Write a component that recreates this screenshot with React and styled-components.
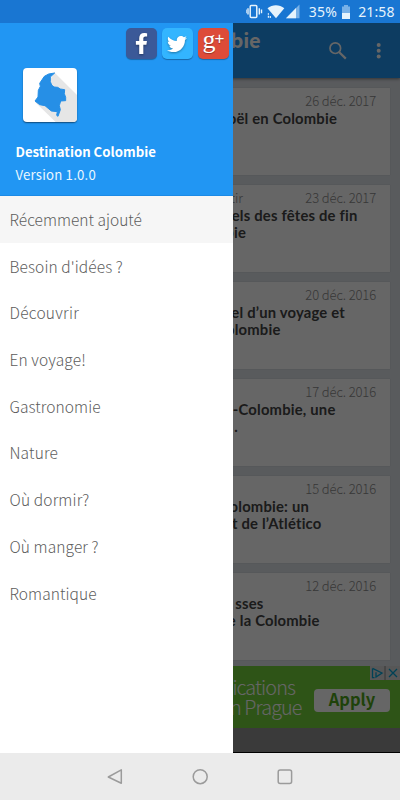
import React from 'react';
import styled, { createGlobalStyle } from 'styled-components';
import { FaFacebookF, FaTwitter } from 'react-icons/fa';

const GlobalStyle = createGlobalStyle`
  * { box-sizing: border-box; }
  body { margin: 0; }
`;

const sans = '"Noto Sans CJK SC", "Noto Sans", sans-serif';

const Screen = styled.div`
  width: 400px;
  height: 800px;
  display: grid;
  grid-template-rows: 23px 730px 47px;
  overflow: hidden;
  font-family: ${sans};
`;

const StatusBar = styled.header`
  background: #1976d2;
  display: flex;
  align-items: center;
  justify-content: flex-end;
  padding-right: 5.5px;
  color: #e6f3fc;
`;

const StatusIcons = styled.svg`
  width: 56px;
  height: 23px;
  margin-right: 7px;
`;

const StatusText = styled.span`
  font: 400 14px/23px "Noto Sans", sans-serif;
  letter-spacing: ${(p) => p.$spacing || 0}px;
  white-space: nowrap;
`;

const Battery = styled.svg`
  width: 10px;
  height: 16px;
  margin: 1px 7px 0 4px;
`;

const Stage = styled.main`
  position: relative;
  overflow: hidden;
`;

const Page = styled.div`
  height: 730px;
  display: flex;
  flex-direction: column;
  background: #dfe3e9;
`;

const AppBar = styled.div`
  height: 55px;
  flex: none;
  background: #2196f3;
  display: flex;
  align-items: flex-start;
  justify-content: space-between;
  box-shadow: 0 1px 3px rgba(0, 0, 0, 0.45);
  color: #fff;
`;

const AppTitle = styled.h1`
  margin: 3px 0 0;
  width: 260.5px;
  text-align: right;
  font: 700 20px/28px ${sans};
  letter-spacing: -0.2px;
  white-space: nowrap;
`;

const BarActions = styled.svg`
  width: 80px;
  height: 55px;
`;

const CardList = styled.div`
  height: 588px;
  flex: none;
  display: flex;
  flex-direction: column;
  gap: 9.4px;
  padding: 9.5px 10px 0;
`;

const Card = styled.article`
  height: 87.65px;
  flex: none;
  background: #fff;
  box-shadow: 0 0 1px rgba(0, 0, 0, 0.2);
  padding: 4.5px 14px 0 0;
`;

const CardMeta = styled.div`
  display: flex;
  justify-content: space-between;
  height: 18px;
  color: #8b8b8b;
`;

const Category = styled.span`
  width: 233px;
  text-align: right;
  font: 300 13px/17px ${sans};
`;

const DateLabel = styled.time`
  font: 300 13px/18px ${sans};
  letter-spacing: -0.12px;
`;

const TitleLine = styled.div`
  width: ${(p) => p.$end - 10}px;
  text-align: right;
  font: 700 14.8px/17px Lato, sans-serif;
  letter-spacing: 0.2px;
  color: #444;
  white-space: nowrap;
`;

const AdBanner = styled.aside`
  height: 62px;
  flex: none;
  background: #74d13b;
  display: grid;
  grid-template-columns: 296px 1fr;
`;

const AdCopy = styled.div`
  padding-top: 11px;
  text-align: right;
  color: #fff;
`;

const AdLine = styled.div`
  font: 300 19.8px/20px ${sans};
  letter-spacing: -0.9px;
  margin-right: ${(p) => p.$inset}px;
  white-space: nowrap;
`;

const AdSide = styled.div`
  display: flex;
  flex-direction: column;
  align-items: flex-end;
`;

const AdChoices = styled.svg`
  width: 30px;
  height: 14px;
`;

const ApplyButton = styled.div`
  width: 76px;
  height: 23px;
  margin: 9px 10px 0 0;
  border-radius: 4px;
  background: #fff;
  color: #4fa51b;
  text-align: center;
  font: 700 16.5px/21px ${sans};
`;

const PageFooter = styled.div`
  flex: 1;
  background: #929292;
  border-bottom: 1px solid #000;
`;

const Scrim = styled.div`
  position: absolute;
  inset: 0;
  background: rgba(0, 0, 0, 0.6);
`;

const Drawer = styled.nav`
  position: absolute;
  inset: 0 auto 0 0;
  width: 233.4px;
  background: #fff;
`;

const DrawerHeader = styled.div`
  height: 173px;
  background: #2196f3;
  border-bottom: 1px solid #1b8ae6;
  display: flex;
  flex-direction: column;
`;

const SocialRow = styled.div`
  height: 45px;
  display: flex;
  justify-content: flex-end;
  gap: 5px;
  padding: 5px 4.5px 0 0;
`;

const SocialButton = styled.span`
  width: 31px;
  height: 31px;
  border-radius: 5px;
  display: flex;
  align-items: ${(p) => p.$align || 'center'};
  justify-content: center;
  background: ${(p) => p.$color};
  color: #fff;
  box-shadow: 0 1px 1px rgba(0, 0, 0, 0.3);
  svg { filter: drop-shadow(0 1px 1px rgba(0, 0, 0, 0.35)); }
`;

const PlusG = styled.span`
  font: 400 26px/24px "Liberation Serif", serif;
  text-shadow: 0 1px 1px rgba(0, 0, 0, 0.35);
`;

const PlusSign = styled.span`
  font: 400 17px/22px "Liberation Sans", sans-serif;
  margin-left: -1px;
  text-shadow: 0 1px 1px rgba(0, 0, 0, 0.35);
`;

const AppLogo = styled.svg`
  width: 54px;
  height: 54px;
  margin-left: 22.6px;
  border-radius: 4px;
  background: #fff;
  box-shadow: 0 1px 1.5px rgba(0, 0, 0, 0.5);
`;

const AppName = styled.div`
  margin: 19px 0 0 15.5px;
  font: 700 13.2px/22px ${sans};
  color: #fff;
`;

const Version = styled.div`
  margin: 1px 0 0 15.5px;
  font: 400 13.2px/22px ${sans};
  letter-spacing: 0.2px;
  color: #e9f7ff;
`;

const Menu = styled.ul`
  list-style: none;
  margin: 0;
  padding: 0;
`;

const MenuItem = styled.li`
  height: 46.7px;
  padding: 0 0 0 9.5px;
  font: 300 15.5px/46.7px ${sans};
  letter-spacing: ${(p) => p.$spacing || 0}px;
  color: #5c5c5c;
  background: ${(p) => (p.$active ? '#f6f6f6' : 'transparent')};
`;

const NavBar = styled.footer`
  background: #ebebeb;
  svg { display: block; }
`;

const cards = [
  { date: '26 déc. 2017', lines: [['oël en Colombie', 337]] },
  { date: '23 déc. 2017', category: 'tir', lines: [['iels des fêtes de fin', 357.5], ['bie', 246]] },
  { date: '20 déc. 2016', lines: [['iel d’un voyage et', 345], ['olombie', 280.5]] },
  { date: '17 déc. 2016', lines: [['-Colombie, une', 335.5], ['.', 238]] },
  { date: '15 déc. 2016', lines: [['olombie: un', 309], ['t de l’Atlético', 321.5]] },
  { date: '12 déc. 2016', lines: [['sses', 263.5], ['e la Colombie', 319.5]] },
];

const entries = [
  { label: 'Récemment ajouté', spacing: 0.02 },
  { label: "Besoin d'idées ?", spacing: 0.1 },
  { label: 'Découvrir', spacing: 0.25 },
  { label: 'En voyage!', spacing: 0.12 },
  { label: 'Gastronomie', spacing: 0.07 },
  { label: 'Nature', spacing: 0.15 },
  { label: 'Où dormir?', spacing: 0.15 },
  { label: 'Où manger ?', spacing: 0.1 },
  { label: 'Romantique', spacing: 0.07 },
];

export default function App() {
  return (
    <Screen>
      <GlobalStyle />
      <StatusBar>
        <StatusIcons viewBox="0 0 56 23" fill="none" stroke="currentColor">
          <rect x="4.2" y="5.4" width="6.6" height="12" rx="1" strokeWidth="1.5" />
          <path d="M2 8.2v6.2M0 9.6v3.7M13.3 8.2v6.2M15.5 9.6v3.7" strokeWidth="1.4" />
          <path d="M21.500 8.200c4.800-4 12-4 16.800 0L30 18.300Z" fill="currentColor" stroke="none" />
          <path d="M22.400 13.200v1.500M22.400 15.700v2M24.300 16v1.900" strokeWidth="1.200" />
          <path d="M53.500 4.500V18.200H40Z" fill="#78b1e8" stroke="none" />
          <path d="M50 8.100V18.200H40Z" fill="currentColor" stroke="none" />
        </StatusIcons>
        <StatusText $spacing={0.3}>35%</StatusText>
        <Battery viewBox="0 0 10 16">
          <path d="M3 1h4v1.500h2V9H1V2.500h2Z" fill="#78b1e8" />
          <path d="M1 9h8v6H1Z" fill="#e6f3fc" />
        </Battery>
        <StatusText $spacing={0.1}>21:58</StatusText>
      </StatusBar>

      <Stage>
        <Page>
          <AppBar>
            <AppTitle>bie</AppTitle>
            <BarActions viewBox="0 0 80 55" fill="none" stroke="#fff">
              <circle cx="15.300" cy="25.200" r="5.300" strokeWidth="1.700" />
              <path d="m19 29 6.800 6.600" strokeWidth="2.200" />
              <g fill="#fff" stroke="none">
                <circle cx="58.700" cy="21.900" r="2" />
                <circle cx="58.700" cy="27.700" r="2" />
                <circle cx="58.700" cy="33.500" r="2" />
              </g>
            </BarActions>
          </AppBar>
          <CardList>
            {cards.map((card) => (
              <Card key={card.date}>
                <CardMeta>
                  <Category>{card.category}</Category>
                  <DateLabel>{card.date}</DateLabel>
                </CardMeta>
                {card.lines.map(([text, end]) => (
                  <TitleLine key={text} $end={end}>{text}</TitleLine>
                ))}
              </Card>
            ))}
          </CardList>
          <AdBanner>
            <AdCopy>
              <AdLine $inset={1}>ications</AdLine>
              <AdLine $inset={-5.5}>n Prague</AdLine>
            </AdCopy>
            <AdSide>
              <AdChoices viewBox="0 0 30 14">
                <path d="M0 0h30v14H0Z" fill="#d9d9d9" />
                <path d="M15 0v14" stroke="#888" />
                <g fill="none" stroke="#00a4d6" strokeWidth="1.300">
                  <path d="M2.500 2.400v9.200h2M2.500 2.400l9.500 4.600-6 4V6.200" />
                  <path d="m19 3 8 8M27 3l-8 8" />
                </g>
              </AdChoices>
              <ApplyButton>Apply</ApplyButton>
            </AdSide>
          </AdBanner>
          <PageFooter />
        </Page>
        <Scrim />
        <Drawer>
          <DrawerHeader>
            <SocialRow>
              <SocialButton $color="#3b5998"><FaFacebookF size={21} /></SocialButton>
              <SocialButton $color="#33b5ff"><FaTwitter size={20} /></SocialButton>
              <SocialButton $color="#dd4b39" $align="flex-start">
                <PlusG>g</PlusG><PlusSign>+</PlusSign>
              </SocialButton>
            </SocialRow>
            <AppLogo viewBox="0 0 162 162">
              <path d="M95 14 162 81V162H98L36 102Z" fill="#e6e6e6" />
              <path
                d="M95 15 82 27V41L86 51 93 57 104 58 112 63 125 65 124 77 128 88V98L113 99 109 113 112 125 105 145 101 142 103 131 85 129 66 113 50 110 36 99 45 87 46 67 52 55 50 46 64 25 77 18Z"
                fill="#268fe6" stroke="#268fe6" strokeWidth="3" strokeLinejoin="round"
              />
            </AppLogo>
            <AppName>Destination Colombie</AppName>
            <Version>Version 1.0.0</Version>
          </DrawerHeader>
          <Menu>
            {entries.map((entry, i) => (
              <MenuItem key={entry.label} $active={i === 0} $spacing={entry.spacing}>
                {entry.label}
              </MenuItem>
            ))}
          </Menu>
        </Drawer>
      </Stage>

      <NavBar>
        <svg width="400" height="47" fill="none" stroke="#9b9b9b" strokeWidth="1.500" strokeLinejoin="round">
          <path d="M121.300 16.800v13.400L108.300 24Z" />
          <circle cx="200.200" cy="23.700" r="7" />
          <rect x="278.200" y="17" width="13.400" height="13.400" rx="2" />
        </svg>
      </NavBar>
    </Screen>
  );
}
